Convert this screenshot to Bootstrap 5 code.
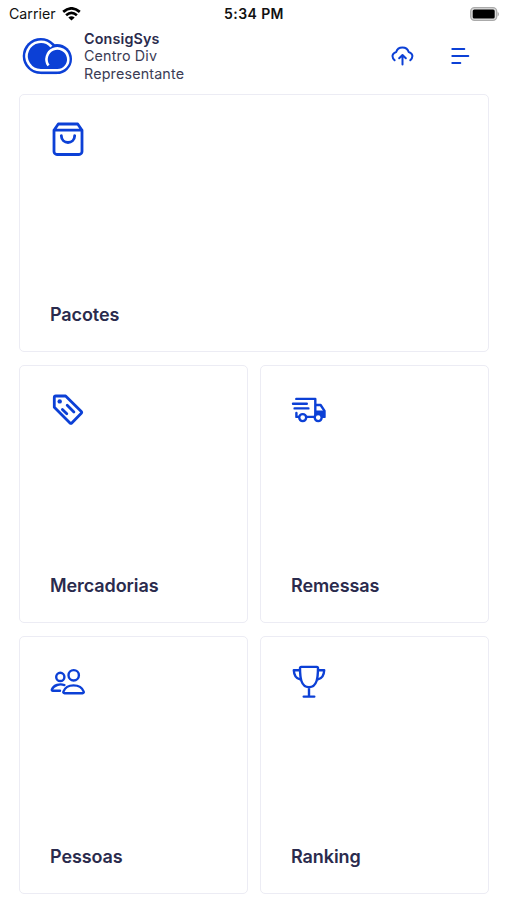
<!DOCTYPE html>
<html lang="pt-BR">
<head>
<meta charset="utf-8">
<meta name="viewport" content="width=device-width, initial-scale=1">
<title>ConsigSys</title>
<link href="https://cdn.jsdelivr.net/npm/bootstrap@5.3.0/dist/css/bootstrap.min.css" rel="stylesheet">
<style>
body{font-family:Inter,"Liberation Sans",sans-serif;background:#fff;color:#2a2b4d;height:900px;overflow:hidden}
svg{display:block;flex:none}
.status-bar{height:28px;padding:0 8px 0 9px;color:#111;font-size:14.2px;line-height:28px}
.status-side{flex:1 1 0}
.wifi{margin-left:6px}
.clock{font-weight:600;font-size:14px;letter-spacing:.4px}
.app-bar{height:66px;padding:0 37.5px 10px 22px}
.app-actions{gap:36px}
.brand-text{font-size:14.3px;line-height:17.5px;letter-spacing:.17px;margin-left:11px;color:#3b3c55}
.brand-text strong{font-weight:600;color:#2a2b4d}
.tiles{display:grid;grid-template-columns:1fr 1fr;gap:13px 12px;padding:0 18px 0 19px}
.tile{height:258px;border:1.5px solid #ececf4;border-radius:5px;padding:27px 30px 24px;color:#2a2b4d}
.tile-wide{grid-column:span 2}
.tile-name{font-size:18px;line-height:24px;font-weight:600;letter-spacing:-.09px}
.ink{fill:none;stroke:#0c40d6;stroke-width:2.8;stroke-linecap:round;stroke-linejoin:round}
.ink-medium{stroke-width:2.4}
.ink-thin{stroke-width:2}
</style>
</head>
<body>
<div class="status-bar d-flex align-items-center">
  <div class="status-side d-flex align-items-center">
    <span>Carrier</span>
    <svg class="wifi" width="19" height="14" viewBox="0 0 19 14" fill="none" stroke="#000" stroke-width="2.7"><path d="M1.2 4.9Q9.5-2.2 17.8 4.9M4.1 8.2Q9.5 3.6 14.9 8.2"/><path d="M6.3 10.5Q9.5 7.8 12.7 10.5L9.5 13.6z" fill="#000" stroke="none"/></svg>
  </div>
  <span class="clock">5:34 PM</span>
  <div class="status-side d-flex justify-content-end">
    <svg width="29" height="14" viewBox="0 0 29 14"><rect x=".7" y=".7" width="26" height="12.6" rx="3.8" fill="#ddd" stroke="#aaa" stroke-width="1.3"/><rect x="2.7" y="2.5" width="22" height="9" rx="1.6"/><path d="M27.6 4.8q1.4.6 1.4 2.3t-1.4 2.3z" fill="#aaa"/></svg>
  </div>
</div>
<header class="app-bar d-flex align-items-center justify-content-between">
  <div class="d-flex align-items-center">
    <svg width="51" height="40" viewBox="0 0 51 40"><g fill="#0c40d6"><circle cx="18.8" cy="20" r="18.1"/><circle cx="34.9" cy="23" r="15.1"/><path d="M18.8 30h16.1v8.1H18.8z"/></g><path d="M26.5 29.6A10.9 10.9 0 1 1 34.9 34.2H18.8A14.2 14.2 0 1 1 29.4 10.6" fill="none" stroke="#fff" stroke-width="2.6"/></svg>
    <div class="brand-text"><strong>ConsigSys</strong><br>Centro Div<br>Representante</div>
  </div>
  <div class="app-actions d-flex align-items-center">
    <svg class="ink ink-thin" width="23" height="22" viewBox="0 0 23 22"><path d="M3.6 15.2C.2 12 1.2 8.1 5.2 7.1 6.8.8 16 .8 17.7 7.1c4 1 5 4.9 1.6 8.1M11.5 19.5v-9M8.2 13.2l3.3-3.2 3.3 3.2"/></svg>
    <svg class="ink ink-thin" width="20" height="20" viewBox="0 0 20 20"><path d="M2.3 3h12M2.3 10h16M2.3 17h8"/></svg>
  </div>
</header>
<main class="tiles">
  <a class="tile tile-wide card text-decoration-none justify-content-between" href="#">
    <svg class="ink" width="36" height="36" viewBox="0 0 36 36"><path d="M8.3 2H27.7L32 8.2V29.5a3 3 0 0 1-3 3H7a3 3 0 0 1-3-3V8.2zM4 8.2H32M11.3 13.6c.3 9.2 13.1 9.2 13.4 0"/></svg>
    <div class="tile-name">Pacotes</div>
  </a>
  <a class="tile card text-decoration-none justify-content-between" href="#">
    <svg class="ink" width="36" height="36" viewBox="0 0 36 36"><path d="M5.8 3H15.6L31.3 18.4q.9.9 0 1.8L21.8 29.9q-.9.9-1.8 0L4.3 14.2V4.5q0-1.5 1.5-1.5zM12.4 16.4l4.4 4.4M17.2 12.2l6.7 6.7"/><circle cx="9.7" cy="8.4" r="2.2" fill="#0c40d6" stroke="none"/></svg>
    <div class="tile-name">Mercadorias</div>
  </a>
  <a class="tile card text-decoration-none justify-content-between" href="#">
    <svg class="ink ink-medium" width="36" height="36" viewBox="0 0 36 36"><path d="M5.3 5.9h19v18M2 10.7h13.8M3.6 15.4h13.8M5.4 20v3.9h3M15.3 23.9h8.3M24.3 12H29.6l3.9 5.8v6.1h-2.3"/><path d="M24.3 17.5H34v6.3h-3l-3.5-3-3.2 2z" fill="#0c40d6" stroke="none"/><circle cx="11.7" cy="24.6" r="3.5" fill="#fff"/><circle cx="27.2" cy="24.6" r="3.5" fill="#fff"/></svg>
    <div class="tile-name">Remessas</div>
  </a>
  <a class="tile card text-decoration-none justify-content-between" href="#">
    <svg class="ink ink-medium" width="36" height="36" viewBox="0 0 36 36"><circle cx="23.7" cy="11.3" r="5.2"/><circle cx="10.3" cy="12.9" r="4.1"/><path d="M14.5 29.2c-1 0-1.4-.8-1.1-1.6 3.2-8.3 17.1-8.3 20.3 0 .3.8-.1 1.6-1.1 1.6zM10 26.7H2.8c-.8 0-1.2-.6-.9-1.3 1.8-4.2 7.8-6.1 12.5-4.3"/></svg>
    <div class="tile-name">Pessoas</div>
  </a>
  <a class="tile card text-decoration-none justify-content-between" href="#">
    <svg class="ink ink-medium" width="36" height="36" viewBox="0 0 36 36"><path d="M10.3 2.9H25.7q1.3 0 1.3 1.3C26.9 13 26.3 23.2 18 23.2S9.1 13 9 4.2q0-1.3 1.3-1.3zM9 6.2H2.8c.2 4.2 2 8.2 6.2 9.1M27 6.2h6.2c-.2 4.2-2 8.2-6.2 9.1M18 23.2v9.4M12.7 32.6h10.6"/></svg>
    <div class="tile-name">Ranking</div>
  </a>
</main>
<script src="https://cdn.jsdelivr.net/npm/bootstrap@5.3.0/dist/js/bootstrap.bundle.min.js"></script>
</body>
</html>
